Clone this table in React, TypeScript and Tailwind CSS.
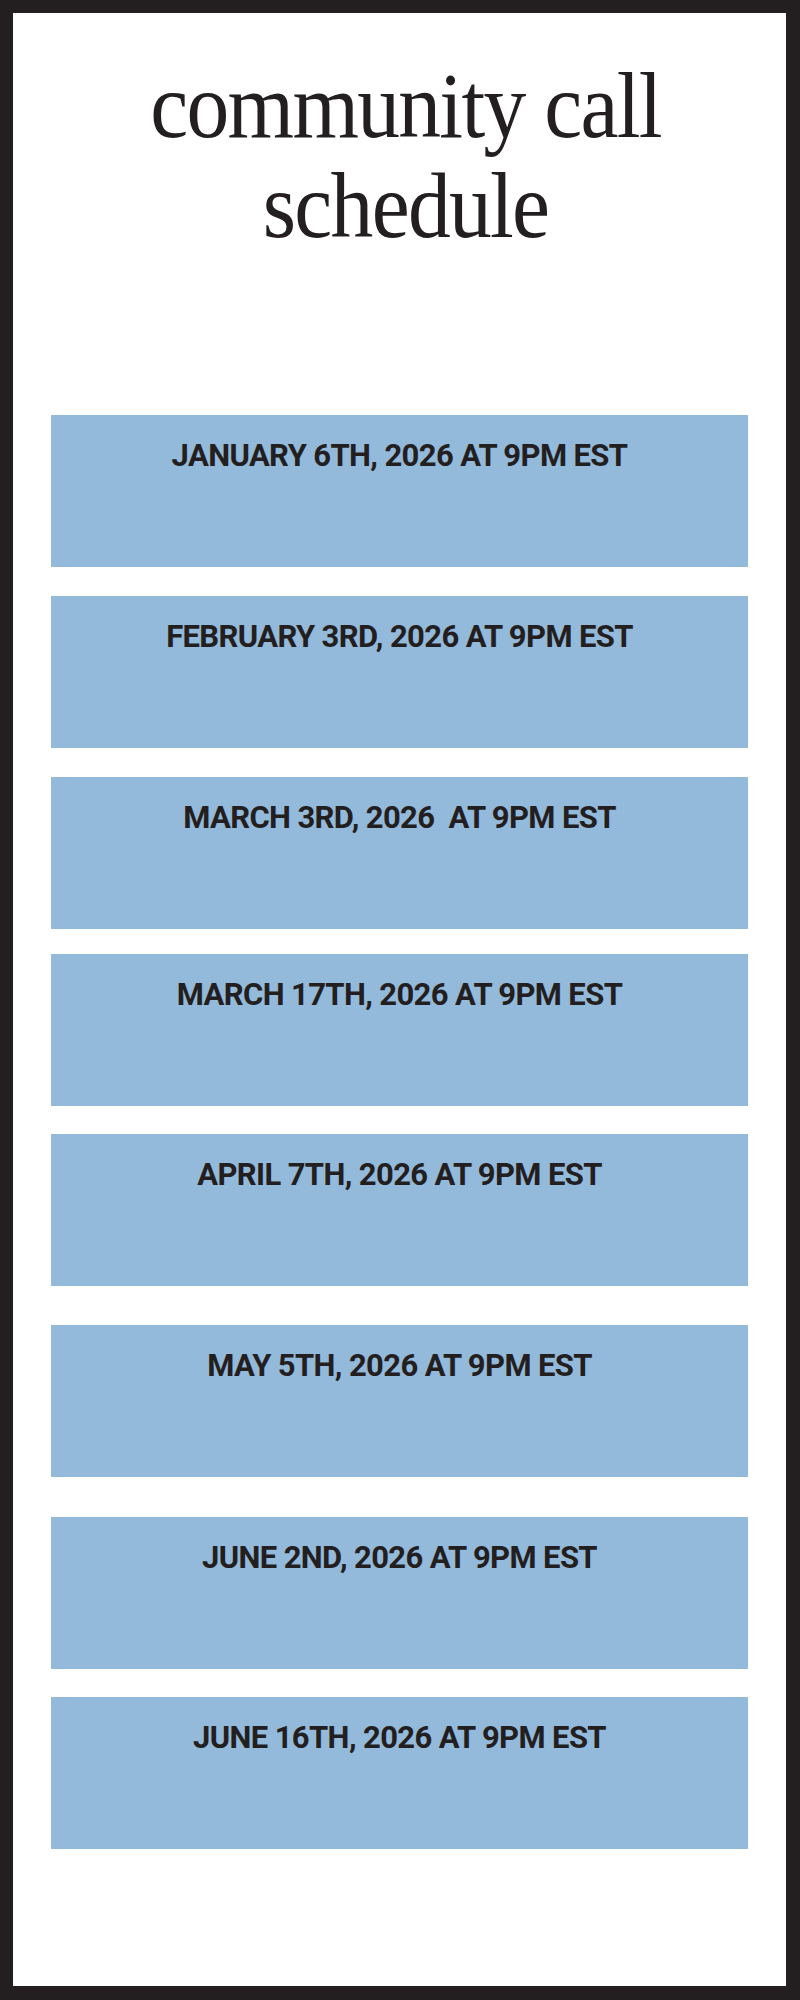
const CALLS = [
  { label: "JANUARY 6TH, 2026 AT 9PM EST", gap: "mt-0" },
  { label: "FEBRUARY 3RD, 2026 AT 9PM EST", gap: "mt-[29px]" },
  { label: "MARCH 3RD, 2026  AT 9PM EST", gap: "mt-[29px]" },
  { label: "MARCH 17TH, 2026 AT 9PM EST", gap: "mt-[25px]" },
  { label: "APRIL 7TH, 2026 AT 9PM EST", gap: "mt-[28px]" },
  { label: "MAY 5TH, 2026 AT 9PM EST", gap: "mt-[39px]" },
  { label: "JUNE 2ND, 2026 AT 9PM EST", gap: "mt-[40px]" },
  { label: "JUNE 16TH, 2026 AT 9PM EST", gap: "mt-[28px]" },
];

export default function App() {
  return (
    <div className="w-[800px] h-[2000px] bg-white border-t-[13px] border-l-[13px] border-r-[14px] border-b-[14px] border-[#231f20] text-[#231f20]">
      {/* titulo */}
      <div className="pt-[43px] pl-[12px] flex justify-center">
        <h1
          className="text-center text-[93px] leading-[100px] font-normal tracking-[-0.02em] scale-x-[0.92]"
          style={{ fontFamily: "'Liberation Serif', serif" }}
        >
          community call
          <br />
          schedule
        </h1>
      </div>

      {/* fechas */}
      <div className="mt-[159px] px-[38px] flex flex-col">
        {CALLS.map((call) => (
          <div
            key={call.label}
            className={`${call.gap} h-[152px] bg-[#93b9db] pt-[25px] text-center`}
          >
            <p
              className="text-[31px] leading-none font-bold tracking-[-0.02em] whitespace-pre"
              style={{ fontFamily: "Roboto, sans-serif" }}
            >
              {call.label}
            </p>
          </div>
        ))}
      </div>
    </div>
  );
}
